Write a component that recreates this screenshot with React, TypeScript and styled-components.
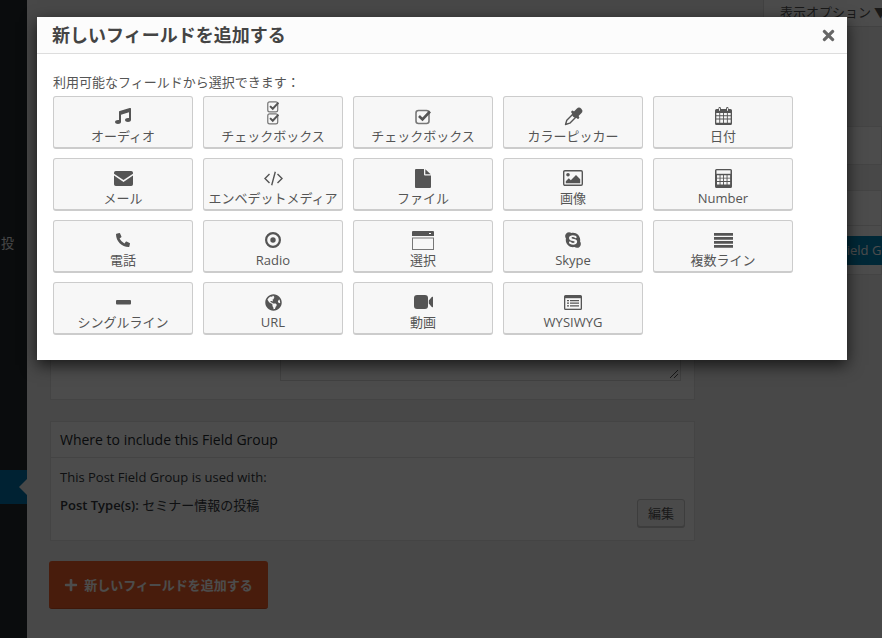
import React from "react";
import styled, { createGlobalStyle } from "styled-components";
import { FaMusic, FaPhoneAlt, FaSkype, FaGlobeAmericas, FaTimes, FaPlus } from "react-icons/fa";

const Global = createGlobalStyle`
  html, body { margin: 0; padding: 0; height: 100%; }
  body { font-family: "Open Sans", "Noto Sans CJK JP", sans-serif; font-size: 13px; color: #444; background: #f1f1f1; }
  * { box-sizing: border-box; }
`;

const Page = styled.div`
  position: relative; width: 882px; height: 638px; overflow: hidden;
  display: flex; background: #f1f1f1;
`;
const Sidebar = styled.nav`
  width: 27px; flex: none; background: #23282d; display: flex; flex-direction: column;
`;
const MenuText = styled.div`
  margin-top: 234px; height: 18px; line-height: 18px; color: #eee; font-size: 13px; white-space: nowrap; padding-left: 1px; overflow: hidden;
`;
const MenuCurrent = styled.div`
  position: relative; margin-top: 218px; height: 34px; background: #0073aa;
  &::after {
    content: ""; position: absolute; right: 0; top: 9px; border: 8px solid transparent; border-right-color: #f1f1f1;
  }
`;
const Main = styled.main`
  flex: 1; min-width: 0; padding-left: 23px; display: flex; flex-direction: column; position: relative;
`;
const ScreenTab = styled.div`
  align-self: flex-end; width: 119px; height: 27px; padding: 2px 0 0 16px;
  background: #fff; border: 1px solid #ddd; border-top: 0; border-right: 0;
  font-size: 13px; line-height: 20px; color: #555; white-space: nowrap;
  display: flex; gap: 3px;
`;
const Columns = styled.div`
  display: flex; flex: 1; min-height: 0;
`;
const LeftCol = styled.div`
  width: 645px; flex: none; display: flex; flex-direction: column; margin-top: 28px;
`;
const RightCol = styled.div`
  flex: 1; min-width: 0; margin-left: 20px; display: flex; flex-direction: column; margin-top: 99px; gap: 25px;
`;
const EditorCard = styled.section`
  height: 345px; background: #fff; border: 1px solid #e5e5e5; padding: 0 13px 18px 0; display: flex; justify-content: flex-end; align-items: flex-end;
`;
const Textarea = styled.div`
  width: 401px; height: 120px; background: #fff; border: 1px solid #ddd; position: relative;
`;
const Grip = styled.svg`
  position: absolute; right: 1px; bottom: 1px;
`;
const Card = styled.section`
  margin-top: 21px; height: 120px; background: #fff; border: 1px solid #e5e5e5; display: flex; flex-direction: column;
`;
const CardHead = styled.h3`
  margin: 0; height: 36px; padding: 0 9px; line-height: 35px; font-size: 14px; font-weight: 400; color: #23282d; border-bottom: 1px solid #e5e5e5;
`;
const CardBody = styled.div`
  position: relative; flex: 1; padding: 9px 9px 0; line-height: 20px; color: #32373c; font-size: 13px;
`;
const CardLine = styled.p`
  margin: 0 0 8px;
  & > b { font-weight: 600; }
`;
const EditButton = styled.span`
  position: absolute; right: 9px; top: 41px; width: 48px; height: 28px; border: 1px solid #ccc; border-radius: 3px;
  background: #f7f7f7; box-shadow: 0 1px 0 #ccc; text-align: center; line-height: 26px; color: #555;
`;
const AddButton = styled.div`
  margin-top: 20px; margin-left: -1px; width: 219px; height: 48px; background: #f05f2b; border-radius: 3px;
  display: flex; align-items: center; justify-content: center; gap: 6px; color: #fff; font-weight: 700; font-size: 13px; white-space: nowrap;
  border-bottom: 1px solid #d04d20;
`;
const SideCardShort = styled.section`
  height: 39px; flex: none; background: #fff; border: 1px solid #e5e5e5;
`;
const SideCard = styled.section`
  height: 85px; flex: none; background: #fff; border: 1px solid #e5e5e5; display: flex; flex-direction: column;
`;
const SideHead = styled.div`
  height: 35px; flex: none; border-bottom: 1px solid #e5e5e5;
`;
const BlueButton = styled.div`
  margin: 10px 0 0 123px; width: 100px; height: 29px; flex: none; background: #0085ba; color: #fff; font-size: 13px; line-height: 28px; white-space: nowrap; padding-left: 1px;
`;
const Overlay = styled.div`
  position: absolute; inset: 0; background: rgba(0, 0, 0, 0.7);
`;
const Modal = styled.div`
  position: absolute; left: 37px; top: 17px; width: 810px; height: 343px; background: #fff;
  box-shadow: 0 5px 15px rgba(0, 0, 0, 0.7);
  display: flex; flex-direction: column;
`;
const ModalHead = styled.header`
  height: 37px; flex: none; background: #fcfcfc; border-bottom: 1px solid #ddd; padding: 0 15px;
  display: flex; align-items: center; justify-content: space-between;
`;
const ModalTitle = styled.h2`
  margin: 0; font-size: 18px; font-weight: 700; color: #444; line-height: 36px;
`;
const Close = styled.span`
  display: flex; color: #666; font-size: 17px; margin-right: -5px;
`;
const ModalBody = styled.div`
  padding: 18px 16px 0;
`;
const Hint = styled.p`
  margin: 0 0 4px; font-size: 13px; line-height: 20px; color: #555;
`;
const Grid = styled.div`
  display: grid; grid-template-columns: repeat(5, 140px); grid-auto-rows: 53px; gap: 9px 10px;
`;
const FieldButton = styled.div`
  border: 1px solid #ccc; border-bottom-width: 2px; border-radius: 3px; background: #f7f7f7;
  display: flex; flex-direction: column; align-items: center; overflow: hidden;
`;
const IconSlot = styled.span<{ $tall?: boolean }>`
  height: ${(p) => (p.$tall ? 26 : 20)}px; margin-top: ${(p) => (p.$tall ? 3 : 9)}px;
  display: flex; flex-direction: column; align-items: center; justify-content: center; color: #555; line-height: 1;
`;
const Label = styled.span`
  font-size: 13px; line-height: 18px; margin-top: 1px; white-space: nowrap; color: #555;
`;
const Stack = styled.span`
  display: flex; flex-direction: column; align-items: center; gap: 0; margin-top: -1px;
  & > svg + svg { margin-top: -1px; }
`;

const ic = "#555";

const CheckSquare = ({ s = 17 }: { s?: number }) => (
  <svg width={s} height={s} viewBox="0 0 17 17">
    <rect x="1" y="2.500" width="13" height="13" rx="2.500" fill="none" stroke="#777" strokeWidth="1.600" />
    <path d="M4 8l3.500 3.500L15 3.500" fill="none" stroke={ic} strokeWidth="2.600" />
  </svg>
);
const Dropper = () => (
  <svg width="19" height="19" viewBox="0 0 19 19">
    <path d="M9.500 6.500L2.800 13.200 1.500 17.500 5.800 16.200 12.500 9.500" fill="#f7f7f7" stroke={ic} strokeWidth="1.400" strokeLinejoin="round" />
    <path d="M11.500 7.500L15 4" stroke={ic} strokeWidth="6.500" strokeLinecap="round" fill="none" />
    <path d="M8.500 5L14 10.500" stroke={ic} strokeWidth="2.600" strokeLinecap="round" fill="none" />
  </svg>
);
const Calendar = () => (
  <svg width="17" height="18" viewBox="0 0 17 18">
    <path fill={ic} d="M1.500 2H3.500V1.200a1.200 1.200 0 0 1 2.400 0V2h5.200V1.200a1.200 1.200 0 0 1 2.400 0V2h2A1.500 1.500 0 0 1 17 3.500v13a1.500 1.500 0 0 1-1.500 1.500h-14A1.500 1.500 0 0 1 0 16.500v-13A1.500 1.500 0 0 1 1.500 2z" />
    <path fill="#f7f7f7" d="M4 1.200h1v2.600H4zM12 1.200h1v2.600h-1z" />
    <path fill="#f7f7f7" d="M1.300 6h3v2.300h-3zM5.200 6h2.900v2.300H5.200zM9 6h2.900v2.300H9zM12.800 6h2.900v2.300h-2.900zM1.300 9.200h3v2.300h-3zM5.200 9.200h2.900v2.300H5.200zM9 9.200h2.900v2.300H9zM12.800 9.200h2.900v2.300h-2.900zM1.300 12.500h3v3.200h-3zM5.200 12.500h2.900v3.200H5.200zM9 12.500h2.900v3.200H9zM12.800 12.500h2.900v3.200h-2.900z" />
  </svg>
);
const Envelope = () => (
  <svg width="19" height="15" viewBox="0 0 19 15">
    <path fill={ic} d="M1.800 0h15.400A1.800 1.800 0 0 1 19 1.800v.9L9.500 9 0 2.700v-.9A1.800 1.800 0 0 1 1.800 0z" />
    <path fill={ic} d="M0 4.600l9.500 6.300L19 4.600v8.600a1.800 1.800 0 0 1-1.800 1.800H1.800A1.800 1.800 0 0 1 0 13.200z" />
  </svg>
);
const CodeGlyph = () => (
  <svg width="19" height="15" viewBox="0 0 19 15">
    <path d="M5.500 3L1 7.500 5.500 12M13.500 3L18 7.500 13.500 12M11.300 .8L7.700 14.200" fill="none" stroke={ic} strokeWidth="1.400" />
  </svg>
);
const FileGlyph = () => (
  <svg width="16" height="19" viewBox="0 0 16 19">
    <path fill={ic} d="M0 1a1 1 0 0 1 1-1h8v5.500a1 1 0 0 0 1 1h6V18a1 1 0 0 1-1 1H1a1 1 0 0 1-1-1z" />
    <path fill={ic} d="M10.300 .3L15.700 5.300H10.300z" />
  </svg>
);
const Picture = () => (
  <svg width="20" height="16" viewBox="0 0 20 16">
    <rect x=".7" y=".7" width="18.600" height="14.600" rx="1.200" fill="none" stroke={ic} strokeWidth="1.400" />
    <circle cx="5" cy="4.800" r="1.800" fill={ic} />
    <path fill={ic} d="M2.800 13.200v-2l3-3 2 2 5.200-5.200 4.200 4.200v4z" />
  </svg>
);
const CalculatorGlyph = () => (
  <svg width="17" height="19" viewBox="0 0 17 19">
    <path fill={ic} d="M1.500 0h14A1.500 1.500 0 0 1 17 1.500v16a1.500 1.500 0 0 1-1.500 1.500h-14A1.500 1.500 0 0 1 0 17.500v-16A1.500 1.500 0 0 1 1.500 0z" />
    <rect x="1.500" y="1.300" width="14" height="3.500" fill="#f7f7f7" />
    <path fill="#f7f7f7" d="M2 6.300h2.600v2.400H2zM5.500 6.300h2.600v2.400H5.500zM9 6.300h2.600v2.400H9zM12.500 6.300h2.600v2.400h-2.600zM2 9.600h2.600V12H2zM5.500 9.600h2.600V12H5.500zM9 9.600h2.600V12H9zM12.500 9.600h2.600V12h-2.600zM2 13h2.600v2.400H2zM5.500 13h2.600v2.400H5.500zM9 13h2.600v2.400H9zM12.500 13h2.600v2.400h-2.600z" />
  </svg>
);
const DotCircle = () => (
  <svg width="16" height="16" viewBox="0 0 16 16">
    <circle cx="8" cy="8" r="6.900" fill="none" stroke={ic} strokeWidth="2.200" />
    <circle cx="8" cy="8" r="2.700" fill={ic} />
  </svg>
);
const SelectIcon = () => (
  <svg width="22" height="19" viewBox="0 0 22 19">
    <path fill={ic} d="M1 0h20a1 1 0 0 1 1 1v4H0V1a1 1 0 0 1 1-1z" />
    <rect x="17" y="2" width="2" height="1" fill="#fff" />
    <rect x=".5" y="7" width="21" height="11.500" fill="none" stroke="#777" />
  </svg>
);
const Lines = () => (
  <svg width="19" height="15" viewBox="0 0 19 15">
    <path fill={ic} d="M0 0h19v2.800H0zM0 4h19v2.800H0zM0 8h19v2.800H0zM0 12h19v2.800H0z" />
  </svg>
);
const MinusGlyph = () => (
  <svg width="15" height="5" viewBox="0 0 15 5">
    <rect width="15" height="4.500" rx="1" fill={ic} />
  </svg>
);
const VideoGlyph = () => (
  <svg width="19" height="14" viewBox="0 0 19 14">
    <path fill={ic} d="M3 0h8a3 3 0 0 1 3 3v8a3 3 0 0 1-3 3H3a3 3 0 0 1-3-3V3a3 3 0 0 1 3-3z" />
    <path fill={ic} d="M14.800 5.500L18 1.800a.6.6 0 0 1 1 .4v9.600a.6.6 0 0 1-1 .4l-3.200-3.700z" />
  </svg>
);
const WysiwygIcon = () => (
  <svg width="18" height="15" viewBox="0 0 18 15">
    <path fill={ic} d="M1.500 0h15A1.500 1.500 0 0 1 18 1.500v12a1.500 1.500 0 0 1-1.500 1.500h-15A1.500 1.500 0 0 1 0 13.500v-12A1.500 1.500 0 0 1 1.500 0z" />
    <rect x="1.300" y="3.200" width="15.400" height="10.500" fill="#f7f7f7" />
    <path fill={ic} d="M3 5h2v1.200H3zM6 5h9v1.200H6zM3 7.600h2v1.200H3zM6 7.600h9v1.200H6zM3 10.200h2v1.200H3zM6 10.200h9v1.200H6z" />
  </svg>
);

type Item = { label: string; icon: React.ReactNode; tall?: boolean };
const items: Item[] = [
  { label: "オーディオ", icon: <FaMusic size={16} /> },
  { label: "チェックボックス", tall: true, icon: <Stack><CheckSquare s={13} /><CheckSquare s={13} /></Stack> },
  { label: "チェックボックス", icon: <CheckSquare /> },
  { label: "カラーピッカー", icon: <Dropper /> },
  { label: "日付", icon: <Calendar /> },
  { label: "メール", icon: <Envelope /> },
  { label: "エンベデットメディア", icon: <CodeGlyph /> },
  { label: "ファイル", icon: <FileGlyph /> },
  { label: "画像", icon: <Picture /> },
  { label: "Number", icon: <CalculatorGlyph /> },
  { label: "電話", icon: <FaPhoneAlt size={14} /> },
  { label: "Radio", icon: <DotCircle /> },
  { label: "選択", icon: <SelectIcon /> },
  { label: "Skype", icon: <FaSkype size={18} /> },
  { label: "複数ライン", icon: <Lines /> },
  { label: "シングルライン", icon: <MinusGlyph /> },
  { label: "URL", icon: <FaGlobeAmericas size={17} /> },
  { label: "動画", icon: <VideoGlyph /> },
  { label: "WYSIWYG", icon: <WysiwygIcon /> },
];

export default function App() {
  return (
    <Page>
      <Global />
      <Sidebar>
        <MenuText>投</MenuText>
        <MenuCurrent />
      </Sidebar>
      <Main>
        <ScreenTab>表示オプション<span>▼</span></ScreenTab>
        <Columns>
          <LeftCol>
            <EditorCard>
              <Textarea>
                <Grip width="10" height="10" viewBox="0 0 10 10">
                  <path d="M1 9l8-8M5 9l4-4" stroke="#555" strokeWidth="1" fill="none" />
                </Grip>
              </Textarea>
            </EditorCard>
            <Card>
              <CardHead>Where to include this Field Group</CardHead>
              <CardBody>
                <CardLine>This Post Field Group is used with:</CardLine>
                <CardLine><b>Post Type(s):</b> セミナー情報の投稿</CardLine>
                <EditButton>編集</EditButton>
              </CardBody>
            </Card>
            <AddButton><FaPlus size={14} />新しいフィールドを追加する</AddButton>
          </LeftCol>
          <RightCol>
            <SideCardShort />
            <SideCard>
              <SideHead />
              <BlueButton>Field Group</BlueButton>
            </SideCard>
          </RightCol>
        </Columns>
      </Main>
      <Overlay />
      <Modal>
        <ModalHead>
          <ModalTitle>新しいフィールドを追加する</ModalTitle>
          <Close><FaTimes /></Close>
        </ModalHead>
        <ModalBody>
          <Hint>利用可能なフィールドから選択できます：</Hint>
          <Grid>
            {items.map((it, i) => (
              <FieldButton key={i}>
                <IconSlot $tall={it.tall}>{it.icon}</IconSlot>
                <Label>{it.label}</Label>
              </FieldButton>
            ))}
          </Grid>
        </ModalBody>
      </Modal>
    </Page>
  );
}
